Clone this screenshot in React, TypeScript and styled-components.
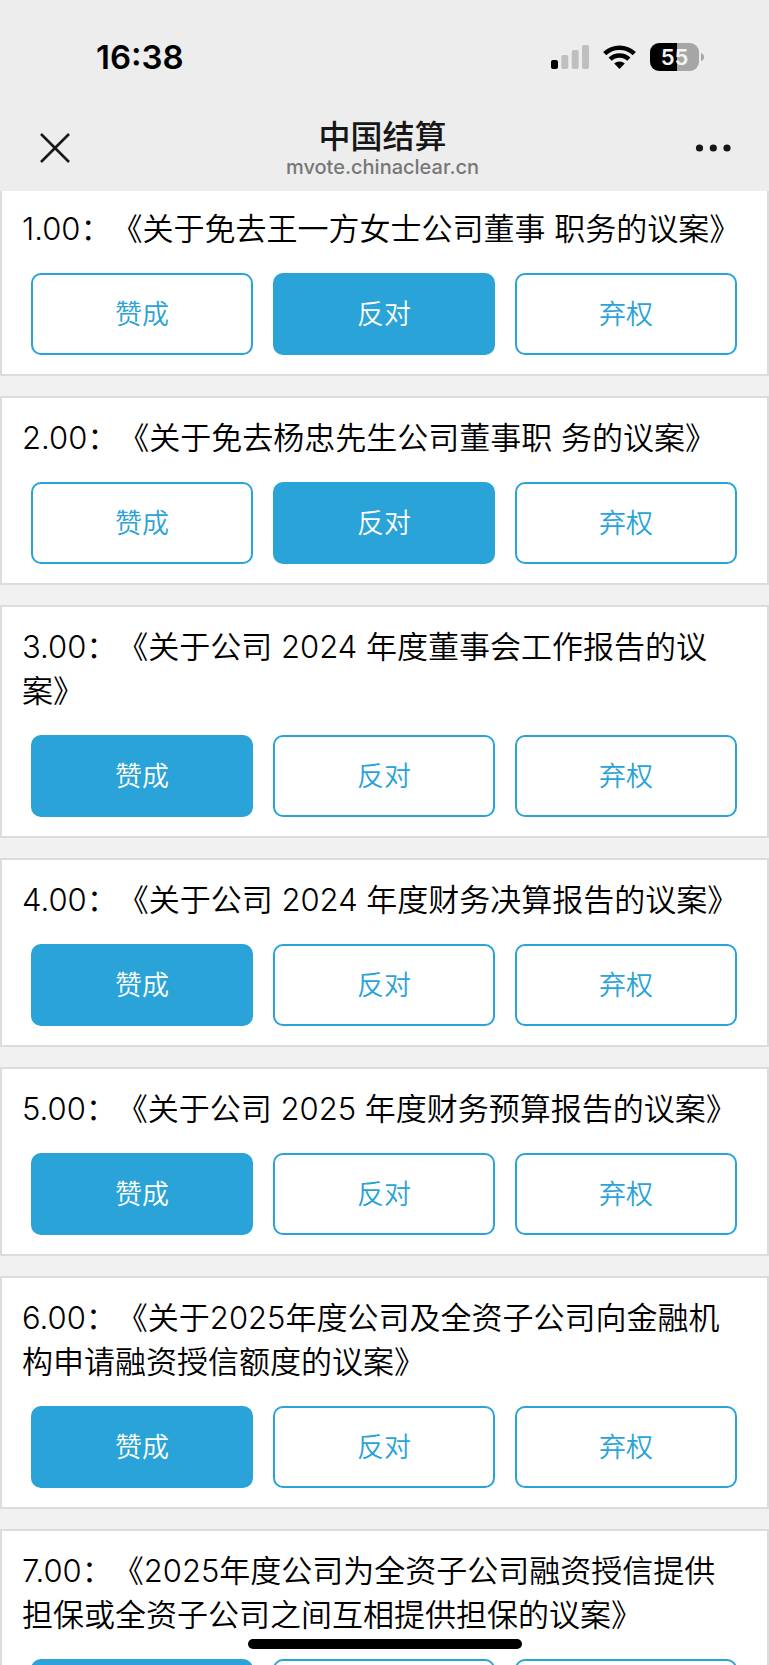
import React, { useState } from "react";
import styled, { createGlobalStyle } from "styled-components";

const GlobalStyle = createGlobalStyle`
  *, *::before, *::after { box-sizing: border-box; }
  body {
    margin: 0;
    background: #f1f1f1;
    color: #000;
    font-family: Inter, "Noto Sans CJK SC", sans-serif;
  }
  h1, h2, p { margin: 0; font-weight: 400; }
  button { font-family: inherit; cursor: pointer; }
`;

const Screen = styled.div`
  display: flex;
  flex-direction: column;
  height: 100vh;
`;

const Header = styled.header`
  flex: none;
  background: #ededed;
`;

const StatusBar = styled.div`
  display: flex;
  align-items: center;
  justify-content: space-between;
  height: 114px;
  padding: 0 65px 0 96px;
`;

const Clock = styled.time`
  font-size: 33px;
  font-weight: 600;
  line-height: 40px;
`;

const Indicators = styled.div`
  display: flex;
  align-items: center;
  gap: 14px;
`;

const Battery = styled.div`
  display: flex;
  align-items: center;
  gap: 2px;
`;

const BatteryBody = styled.span`
  width: 49px;
  height: 28px;
  border-radius: 9px;
  background: linear-gradient(to right, #000 55%, #a6a6a6 55%);
  color: #f4f4f4;
  font-size: 22px;
  font-weight: 600;
  line-height: 28px;
  text-align: center;
`;

const NavBar = styled.div`
  display: grid;
  grid-template-columns: 1fr auto 1fr;
  align-items: center;
  height: 77px;
  padding: 0 38px 9px 34px;
`;

const IconButton = styled.button<{ $end?: boolean }>`
  display: flex;
  justify-self: ${(p) => (p.$end ? "end" : "start")};
  padding: 0;
  border: 0;
  background: none;
  color: #171717;
`;

const Heading = styled.div`
  padding-top: 2px;
  text-align: center;
`;

const SiteName = styled.h1`
  font-size: 32px;
  font-weight: 500;
  line-height: 36px;
  color: #171717;
`;

const SiteHost = styled.p`
  font-size: 20px;
  font-weight: 500;
  line-height: 24px;
  color: #777;
`;

const Viewport = styled.main`
  flex: 1;
  min-height: 0;
  overflow-y: auto;
  scrollbar-width: none;
`;

const MotionList = styled.div`
  display: flex;
  flex-direction: column;
  gap: 20px;
  margin-top: -4px;
`;

const Card = styled.section`
  padding: 18px 20px 19px;
  border: 2px solid #dcdcdc;
  background: #fff;
`;

const MotionTitle = styled.h2`
  padding-right: 3px;
  font-size: 31px;
  font-weight: 350;
  line-height: 44px;
  text-spacing-trim: space-all;
`;

const Choices = styled.div`
  display: grid;
  grid-template-columns: repeat(3, 1fr);
  gap: 20px;
  margin-top: 22px;
  padding: 0 10px 0 9px;
`;

const Choice = styled.button<{ $active: boolean }>`
  height: 82px;
  padding: 2px 0 0;
  border: 2px solid #29a3d8;
  border-radius: 10px;
  background: ${(p) => (p.$active ? "#29a3d8" : "#fff")};
  color: ${(p) => (p.$active ? "#fff" : "#29a3d8")};
  font-size: 27px;
  font-weight: 350;
  line-height: 40px;
`;

const HomeBar = styled.div`
  position: fixed;
  bottom: 16px;
  left: 50%;
  width: 274px;
  height: 10px;
  border-radius: 5px;
  background: #000;
  transform: translateX(-50%);
`;

const OPTIONS = ["赞成", "反对", "弃权"];

const MOTIONS = [
  { no: "1.00", title: "《关于免去王一方女士公司董事 职务的议案》", vote: "反对" },
  { no: "2.00", title: "《关于免去杨忠先生公司董事职 务的议案》", vote: "反对" },
  { no: "3.00", title: "《关于公司 2024 年度董事会工作报告的议案》", vote: "赞成" },
  { no: "4.00", title: "《关于公司 2024 年度财务决算报告的议案》", vote: "赞成" },
  { no: "5.00", title: "《关于公司 2025 年度财务预算报告的议案》", vote: "赞成" },
  { no: "6.00", title: "《关于2025年度公司及全资子公司向金融机构申请融资授信额度的议案》", vote: "赞成" },
  { no: "7.00", title: "《2025年度公司为全资子公司融资授信提供担保或全资子公司之间互相提供担保的议案》", vote: "赞成" },
];

function SignalIcon() {
  return (
    <svg width="38" height="24" viewBox="0 0 38 24" aria-hidden="true">
      <rect x="0" y="15" width="7" height="9" rx="2" fill="#000" />
      <rect x="10.300" y="10" width="7" height="14" rx="2" fill="#bfbfbf" />
      <rect x="20.700" y="5" width="7" height="19" rx="2" fill="#bfbfbf" />
      <rect x="31" y="0" width="7" height="24" rx="2" fill="#bfbfbf" />
    </svg>
  );
}

function WifiIcon() {
  return (
    <svg width="33" height="24" viewBox="0 0 33 24" aria-hidden="true">
      <g fill="none" stroke="#000" strokeWidth="4.600">
        <path d="M1.700 8.600 A21.500 21.500 0 0 1 31.300 8.600" />
        <path d="M7.100 14.200 A13.600 13.600 0 0 1 25.900 14.200" />
      </g>
      <path d="M16.500 24 L11.200 18.600 A7.600 7.600 0 0 1 21.800 18.600 Z" fill="#000" />
    </svg>
  );
}

function Motion({ no, title, vote }: { no: string; title: string; vote: string }) {
  const [selected, setSelected] = useState(vote);
  return (
    <Card>
      <MotionTitle>{`${no}：${title}`}</MotionTitle>
      <Choices role="group" aria-label={no}>
        {OPTIONS.map((option) => (
          <Choice
            key={option}
            type="button"
            $active={option === selected}
            aria-pressed={option === selected}
            onClick={() => setSelected(option)}
          >
            {option}
          </Choice>
        ))}
      </Choices>
    </Card>
  );
}

export default function App() {
  return (
    <Screen lang="zh-CN">
      <GlobalStyle />
      <Header>
        <StatusBar>
          <Clock>16:38</Clock>
          <Indicators>
            <SignalIcon />
            <WifiIcon />
            <Battery>
              <BatteryBody>55</BatteryBody>
              <svg width="3" height="8" viewBox="0 0 3 8" aria-hidden="true">
                <path d="M0 0 Q3 1 3 4 Q3 7 0 8 Z" fill="#a6a6a6" />
              </svg>
            </Battery>
          </Indicators>
        </StatusBar>
        <NavBar>
          <IconButton type="button" aria-label="关闭">
            <svg width="42" height="42" viewBox="0 0 42 42" aria-hidden="true">
              <path d="M7 7 L35 35 M35 7 L7 35" stroke="currentColor" strokeWidth="2.600" fill="none" />
            </svg>
          </IconButton>
          <Heading>
            <SiteName>中国结算</SiteName>
            <SiteHost>mvote.chinaclear.cn</SiteHost>
          </Heading>
          <IconButton type="button" aria-label="更多" $end>
            <svg width="42" height="42" viewBox="0 0 42 42" fill="currentColor" aria-hidden="true">
              <circle cx="10.500" cy="21" r="3.600" />
              <circle cx="24.300" cy="21" r="3.600" />
              <circle cx="38" cy="21" r="3.600" />
            </svg>
          </IconButton>
        </NavBar>
      </Header>
      <Viewport>
        <MotionList>
          {MOTIONS.map((motion) => (
            <Motion key={motion.no} {...motion} />
          ))}
        </MotionList>
      </Viewport>
      <HomeBar />
    </Screen>
  );
}
